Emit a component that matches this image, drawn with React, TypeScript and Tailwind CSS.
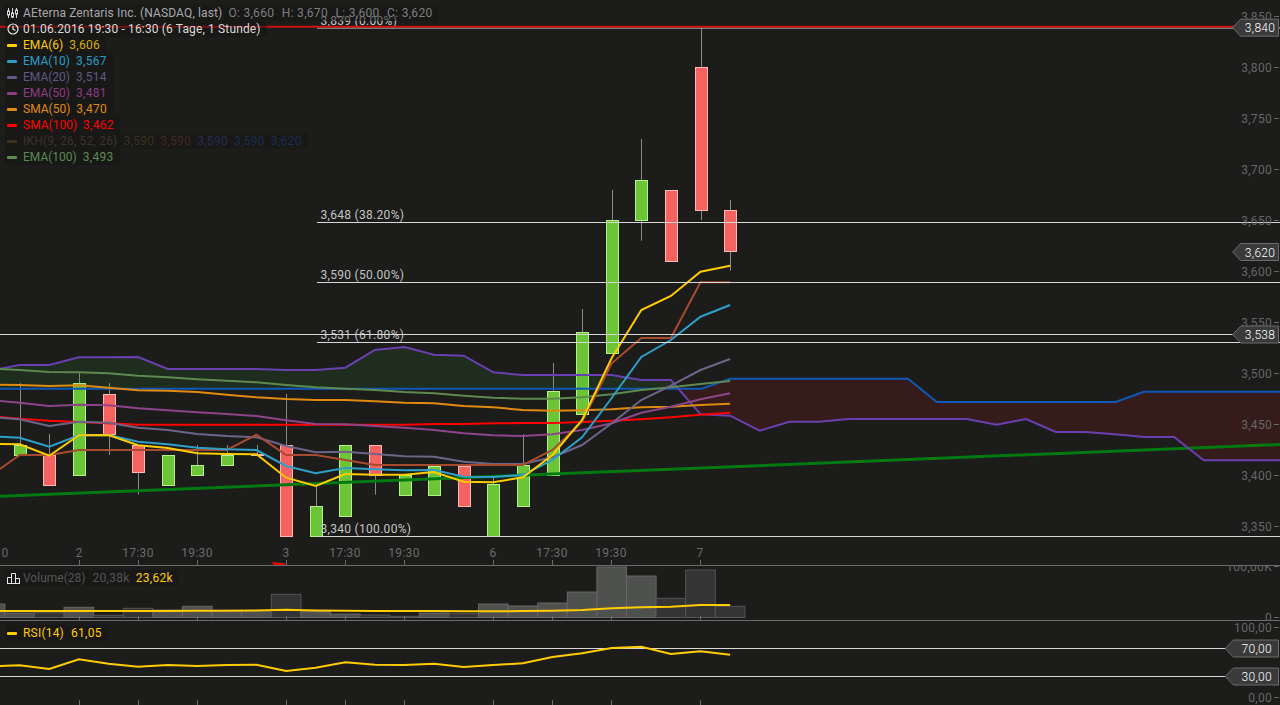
import React from "react";

const X = (i: number) => 19.7 + 29.6 * i;

// y values in page pixels: first entry sits at x=0, the rest on candle slots
const toPoints = (ys: number[]) =>
  ys.map((y, n) => `${n === 0 ? 0 : X(n - 1).toFixed(1)},${y}`).join(" ");

const SERIES = [
  { color: "#5e8a50", ys: [369, 370, 372, 372.3, 373.3, 375.7, 377.3, 379.3, 380.7, 382.3, 385, 387.3, 388.7, 390, 392, 393.3, 395.7, 397.7, 398.7, 398.7, 397.3, 394.3, 390, 387.3, 384, 381] },
  { color: "#ff0000", ys: [417, 418.7, 420.7, 422, 423.3, 424.7, 424.7, 424.7, 424.7, 424.7, 424.7, 424.7, 424.7, 424.7, 424.7, 424, 424, 423.3, 423, 423, 422, 420.7, 419.3, 417.3, 414.7, 412.7] },
  { color: "#e08a10", ys: [384.7, 385, 386, 385.3, 387.7, 390.3, 390.7, 392, 394.7, 397.3, 399, 400, 400, 401.3, 402.7, 403.3, 406, 407.3, 410, 410.7, 410.3, 409.3, 407.3, 406.7, 405, 403.7] },
  { color: "#8e4488", ys: [401, 402.7, 406, 404.7, 405.3, 408.3, 410.3, 412.3, 414, 416, 420.3, 424, 424.3, 426, 427.7, 430, 433.3, 435.3, 436, 434.3, 430, 423.3, 412.7, 406.7, 399.3, 393.3] },
  { color: "#6e6488", ys: [417.7, 419.3, 426, 421.7, 422.7, 427.7, 430, 434, 436, 437.3, 446, 452.3, 451.7, 454, 456.3, 456.7, 461.7, 464, 464, 457.3, 445, 423.3, 400, 385.7, 370, 359] },
  { color: "#a84a30", ys: [469, 455, 455, 450, 450, 450, 450, 450, 450, 434.7, 455, 455, 460, 465, 465, 465, 465, 465, 465, 450, 421.7, 363.3, 338, 338, 282.3, 282.3] },
  { color: "#2f9fc8", ys: [436.7, 437.7, 446.7, 435.3, 435, 441.7, 444.3, 447.7, 449.3, 450, 466, 473.3, 468, 469.3, 470.3, 470, 476.7, 477, 475, 460, 437.3, 398, 357, 340, 316.7, 305] },
  { color: "#ffcc00", ys: [444, 444.3, 455.7, 435.3, 435, 445.3, 448, 453.3, 454, 454.3, 477.7, 486, 474, 474.7, 474.7, 472, 481.7, 482.3, 477.3, 455, 420, 358, 310, 296, 271.7, 265.7] },
];

// open/close box plus wick, all in page pixels
const CANDLES: { i: number; top: number; bottom: number; hi?: number; lo?: number; up: boolean }[] = [
  { i: 0, top: 445, bottom: 455.7, hi: 383, up: true },
  { i: 1, top: 455, bottom: 485.7, hi: 434, up: false },
  { i: 2, top: 383, bottom: 475.7, hi: 373, up: true },
  { i: 3, top: 394, bottom: 434.7, hi: 383, lo: 455, up: false },
  { i: 4, top: 445, bottom: 472.7, lo: 494.7, up: false },
  { i: 5, top: 455, bottom: 485.7, up: true },
  { i: 6, top: 465, bottom: 475.7, hi: 445, up: true },
  { i: 7, top: 455, bottom: 465.7, hi: 445, up: true },
  { i: 8, top: 454, bottom: 455.5, hi: 445, up: false },
  { i: 9, top: 445, bottom: 536.7, hi: 394, up: false },
  { i: 10, top: 506, bottom: 536.7, hi: 485, up: true },
  { i: 11, top: 445, bottom: 516.7, up: true },
  { i: 12, top: 445, bottom: 475.7, lo: 494.7, up: false },
  { i: 13, top: 475, bottom: 495.7, up: true },
  { i: 14, top: 466, bottom: 495.7, up: true },
  { i: 15, top: 466, bottom: 506.7, up: false },
  { i: 16, top: 484, bottom: 536.7, hi: 476, up: true },
  { i: 17, top: 465, bottom: 506.7, hi: 434, up: true },
  { i: 18, top: 391, bottom: 475.7, hi: 363, up: true },
  { i: 19, top: 332, bottom: 414.3, hi: 309, up: true },
  { i: 20, top: 220.3, bottom: 353.5, hi: 190, up: true },
  { i: 21, top: 180, bottom: 220.7, hi: 139, lo: 240.7, up: true },
  { i: 22, top: 190, bottom: 261.7, up: false },
  { i: 23, top: 67, bottom: 210.7, hi: 28, lo: 220, up: false },
  { i: 24, top: 210, bottom: 251.7, hi: 200, lo: 270.7, up: false },
];

const PURPLE = [368.7, 365, 365, 357.3, 357.3, 357, 369, 369, 369, 369, 370, 370, 367.7, 350, 347, 354.7, 355.7, 372.3, 375, 375, 375, 375, 380, 380, 414.3, 415.7, 430.7, 421.7, 421.7, 419, 419, 419, 419, 419, 424.7, 419, 432, 432, 434.3, 437, 437, 460.3, 460.3, 460.3, 460.3];
const BLUE_LINE = "0,388.7 701.7,388.7 730,378.7 908,378.7 936.8,402 1115.5,402 1144,391.7 1280,391.7";

const CROSS_X = 678.6;
const greenCloud = `0,368.7 ${PURPLE.slice(1, 24).map((y, n) => `${X(n).toFixed(1)},${y}`).join(" ")} ${CROSS_X},388.7 0,388.7`;
const redCloud = `${CROSS_X},388.7 701.7,388.7 730,378.7 908,378.7 936.8,402 1115.5,402 1144,391.7 1280,391.7 1280,460.3 ${PURPLE.slice(24, 43).reverse().map((y, n) => `${X(41 - n).toFixed(1)},${y}`).join(" ")}`;

const FIBS = [
  { y: 28, label: "3,839 (0.00%)", text: 25 },
  { y: 222.5, label: "3,648 (38.20%)", text: 219 },
  { y: 282.5, label: "3,590 (50.00%)", text: 279 },
  { y: 342.5, label: "3,531 (61.80%)", text: 339 },
  { y: 536.5, label: "3,340 (100.00%)", text: 533 },
];

const PRICES = ["3,850", "3,800", "3,750", "3,700", "3,650", "3,600", "3,550", "3,500", "3,450", "3,400", "3,350"];

const TIME_TICKS = [
  { x: 79, label: "2" },
  { x: 138, label: "17:30" },
  { x: 197, label: "19:30" },
  { x: 286, label: "3" },
  { x: 345, label: "17:30" },
  { x: 404, label: "19:30" },
  { x: 493, label: "6" },
  { x: 552, label: "17:30" },
  { x: 611, label: "19:30" },
  { x: 700, label: "7" },
];

const VOLUME: { top: number; up: boolean }[] = [
  { top: 604, up: true },
  { top: 613, up: true },
  { top: 612.7, up: false },
  { top: 607.3, up: true },
  { top: 615.3, up: false },
  { top: 608.3, up: false },
  { top: 610, up: true },
  { top: 606.3, up: true },
  { top: 610.3, up: true },
  { top: 610.7, up: true },
  { top: 594.3, up: false },
  { top: 611.7, up: true },
  { top: 614, up: true },
  { top: 615, up: false },
  { top: 616.3, up: false },
  { top: 613, up: true },
  { top: 613.7, up: false },
  { top: 604, up: true },
  { top: 606, up: true },
  { top: 603, up: true },
  { top: 592, up: true },
  { top: 567, up: true },
  { top: 576, up: true },
  { top: 598.3, up: false },
  { top: 570, up: false },
  { top: 606.3, up: false },
];

const VOLUME_MA = [611, 611, 611, 611, 611, 611, 611, 610.7, 610.7, 610.5, 609.8, 610.5, 610.8, 611, 611, 611, 611.2, 611.3, 611, 610.7, 610, 608.3, 607.3, 606.7, 605, 605];
const RSI = [666, 665.3, 669, 659.3, 663.7, 666.7, 665, 666, 665, 664.7, 671, 667.7, 662.3, 664.7, 665, 663.7, 667, 665, 663.3, 657, 653.3, 648, 646.7, 654, 651.3, 654.7];

function PriceTag({ y, label, tip, textX }: { y: number; label: string; tip: number; textX: number }) {
  const shoulder = tip + 8;
  return (
    <g>
      <polygon
        points={`${tip},${y} ${shoulder},${y - 8.5} 1278.5,${y - 8.5} 1278.5,${y + 8.5} ${shoulder},${y + 8.5}`}
        fill="#3a3a3a"
        stroke="#6b6b6b"
      />
      <text x={textX} y={y + 4.5} textAnchor="end" className="fill-white text-[12px] font-light">
        {label}
      </text>
    </g>
  );
}

function AxisLabel({ y, label }: { y: number; label: string }) {
  return (
    <g>
      <text x="1272" y={y + 4.5} textAnchor="end" className="fill-[#666666] text-[12px]">
        {label}
      </text>
      <line x1="1274" x2="1279" y1={y + 0.5} y2={y + 0.5} stroke="#666666" />
    </g>
  );
}

function Candle({ i, top, bottom, hi, lo, up }: (typeof CANDLES)[number]) {
  const x = Math.round(X(i));
  const y0 = Math.floor(top) + 0.5;
  const y1 = Math.floor(bottom) + 0.5;
  return (
    <g>
      {hi !== undefined && <line x1={x + 0.5} x2={x + 0.5} y1={hi} y2={y0} stroke="#8a8a8a" />}
      {lo !== undefined && <line x1={x + 0.5} x2={x + 0.5} y1={y1} y2={lo} stroke="#8a8a8a" />}
      <rect
        x={x - 5.5}
        y={y0}
        width="12"
        height={y1 - y0}
        fill={up ? "#6cc437" : "#f56262"}
        stroke={up ? "#b8f08c" : "#ffb9b0"}
      />
    </g>
  );
}

function LegendRow({ color, children }: { color?: string; children: React.ReactNode }) {
  return (
    <div className="flex h-4 items-center gap-[6px] bg-[#14141480] pr-[6px] pl-[2px]">
      {color ? <span className="h-[3px] w-[10px] rounded-[1px]" style={{ backgroundColor: color }} /> : null}
      {children}
    </div>
  );
}

function Name({ c, children }: { c: string; children: React.ReactNode }) {
  return (
    <span className="tracking-normal" style={{ color: c }}>
      {children}
    </span>
  );
}

function Val({ c, children }: { c: string; children: React.ReactNode }) {
  return <span style={{ color: c }}>{children}</span>;
}

const LEGEND = [
  { color: "#ffcc00", name: "EMA(6)", value: "3,606", vc: "#d9ad00" },
  { color: "#2a9cc8", name: "EMA(10)", value: "3,567", vc: "#2a9cc8" },
  { color: "#5f5a82", name: "EMA(20)", value: "3,514", vc: "#5f5a82" },
  { color: "#8a3e82", name: "EMA(50)", value: "3,481", vc: "#8a3e82" },
  { color: "#e08a10", name: "SMA(50)", value: "3,470", vc: "#e08a10" },
  { color: "#ff0000", name: "SMA(100)", value: "3,462", vc: "#ff0000" },
];

export default function App() {
  return (
    <div className="flex h-[705px] w-[1280px] flex-col overflow-hidden bg-[#1c1c1b] font-['Roboto',sans-serif] text-[12px] leading-4 tracking-[0.3px]">
      {/* price panel */}
      <div className="relative h-[566px] border-b border-[#6b6b6b]">
        <svg width="1280" height="565" className="block">
          {CANDLES.map((c) => (
            <Candle key={c.i} {...c} />
          ))}
          <polygon points={greenCloud} fill="#2ca02c" fillOpacity="0.13" />
          <polygon points={redCloud} fill="#b01e1e" fillOpacity="0.17" />
          <line x1="0" y1="496.3" x2="1280" y2="444.5" stroke="#007a10" strokeWidth="3" />
          <polyline points={BLUE_LINE} fill="none" stroke="#1058b8" strokeWidth="2" />
          <polyline
            points={PURPLE.map((y, n) => `${n === 0 ? 0 : X(n - 1).toFixed(1)},${y}`).join(" ")}
            fill="none"
            stroke="#6a40b0"
            strokeWidth="2"
          />
          {SERIES.map((s) => (
            <polyline key={s.color} points={toPoints(s.ys)} fill="none" stroke={s.color} strokeWidth="2" />
          ))}

          {FIBS.map((f) => (
            <g key={f.label}>
              <line x1="317" x2="1280" y1={f.y} y2={f.y} stroke="#d8d8d8" />
              <text x="320.5" y={f.text} className="fill-[#c4c4c4] text-[12px]">
                {f.label}
              </text>
            </g>
          ))}
          <line x1="0" x2="1236" y1="26.7" y2="26.7" stroke="#c81212" strokeWidth="2" />
          <line x1="0" x2="1236" y1="334.5" y2="334.5" stroke="#d8d8d8" />

          {PRICES.map((p, n) => (
            <AxisLabel key={p} y={16 + n * 51} label={p} />
          ))}
          <PriceTag y={27.7} label="3,840" tip={1232.7} textX={1275.3} />
          <PriceTag y={252} label="3,620" tip={1232.7} textX={1275.3} />
          <PriceTag y={334.5} label="3,538" tip={1232.7} textX={1275.3} />

          <text x="1.5" y="557" className="fill-[#6b6b6b] text-[12px]">
            0
          </text>
          {TIME_TICKS.map((t) => (
            <g key={t.x}>
              <text x={t.x} y="557" textAnchor="middle" className="fill-[#6b6b6b] text-[12px]">
                {t.label}
              </text>
              <line x1={t.x + 0.5} x2={t.x + 0.5} y1="560" y2="565" stroke="#6b6b6b" />
            </g>
          ))}
          <polygon points="271,562 286,563.5 285,565 274,565" fill="#f00000" />
        </svg>

        <div className="absolute top-[5px] left-[5px] flex flex-col items-start whitespace-nowrap">
          <LegendRow>
            <svg className="-mr-[1px]" width="11" height="12" viewBox="0 0 11 12" fill="none" stroke="#d8d8d8" strokeWidth="1">
              <path d="M1.5 1v10M5.5 1v10M9.5 1v10" />
              <rect x="0.5" y="4" width="2" height="4" fill="#1b1b1b" />
              <rect x="4.5" y="6" width="2" height="4" fill="#1b1b1b" />
              <rect x="8.5" y="3" width="2" height="4" fill="#1b1b1b" />
            </svg>
            <span className="tracking-[0.13px] text-[#a8a8a8]">AEterna Zentaris Inc. (NASDAQ, last)</span>
            <span className="flex gap-[7.5px] text-[#7e7e7e]">
              <span>O: 3,660</span>
              <span>H: 3,670</span>
              <span>L: 3,600</span>
              <span>C: 3,620</span>
            </span>
          </LegendRow>
          <LegendRow>
            <svg className="-mr-[2px]" width="12" height="12" viewBox="0 0 12 12" fill="none" stroke="#e8e8e8" strokeWidth="1.2">
              <circle cx="6" cy="6" r="5" />
              <path d="M6 2.8V6.2L8.5 7.5" />
            </svg>
            <span className="tracking-[0.14px] text-[#d8d8d8]">01.06.2016 19:30 - 16:30 (6 Tage, 1 Stunde)</span>
          </LegendRow>
          {LEGEND.map((r) => (
            <LegendRow key={r.name} color={r.color}>
              <Name c={r.color}>{r.name}</Name>
              <Val c={r.vc}>{r.value}</Val>
            </LegendRow>
          ))}
          <LegendRow color="#3c3220">
            <span className="tracking-[0.2px] text-[#3c3428]">IKH(9, 26, 52, 26)</span>
            <span className="flex gap-[6px]">
              <Val c="#3a3220">3,590</Val>
              <Val c="#452820">3,590</Val>
              <Val c="#2a2a55">3,590</Val>
              <Val c="#1a2d50">3,590</Val>
              <Val c="#1a2d50">3,620</Val>
            </span>
          </LegendRow>
          <LegendRow color="#5c8a50">
            <Name c="#5c8a50">EMA(100)</Name>
            <Val c="#5c8a50">3,493</Val>
          </LegendRow>
        </div>
      </div>

      {/* volume panel */}
      <div className="relative h-[55px] border-b border-[#6b6b6b]">
        <svg width="1280" height="54" className="block">
          <g transform="translate(0,-566)">
            {VOLUME.map((v, n) => (
              <rect
                key={n}
                x={X(n - 1) - 14.8}
                y={v.top}
                width="29.6"
                height={617.5 - v.top}
                fill={v.up ? "#4f514f" : "#343434"}
                stroke={v.up ? "#666666" : "#555555"}
              />
            ))}
            <polyline points={toPoints(VOLUME_MA)} fill="none" stroke="#ffcc00" strokeWidth="2" />
            {TIME_TICKS.map((t) => (
              <line key={t.x} x1={t.x + 0.5} x2={t.x + 0.5} y1="616" y2="620" stroke="#6b6b6b" />
            ))}
            <AxisLabel y={566} label="100,00K" />
            <AxisLabel y={617} label="0" />
          </g>
        </svg>
        <div className="absolute top-[4px] left-[5px] whitespace-nowrap">
          <div className="flex h-4 items-center gap-[6px] bg-[#14141480] pr-[6px] pl-[2px]">
            <svg className="-mr-[4px]" width="14" height="12" viewBox="0 0 14 12" fill="none" stroke="#e8e8e8" strokeWidth="1">
              <path d="M0.5 11.5V5.5H4.5V11.5M4.5 11.5V1.5H8.5V11.5M8.5 11.5V6.5H12.5V11.5M0 11.5H13" />
            </svg>
            <span className="mr-[1px] tracking-normal text-[#555555]">Volume(28)</span>
            <span className="text-[#555555]">20,38k</span>
            <span className="text-[#ffcc00]">23,62k</span>
          </div>
        </div>
      </div>

      {/* rsi panel */}
      <div className="relative flex-1">
        <svg width="1280" height="84" className="block">
          <g transform="translate(0,-621)">
            <line x1="0" x2="1226" y1="648.5" y2="648.5" stroke="#d8d8d8" />
            <line x1="0" x2="1226" y1="676.5" y2="676.5" stroke="#d8d8d8" />
            <polyline points={toPoints(RSI)} fill="none" stroke="#ffcc00" strokeWidth="2" />
            {TIME_TICKS.map((t) => (
              <line key={t.x} x1={t.x + 0.5} x2={t.x + 0.5} y1="700" y2="705" stroke="#6b6b6b" />
            ))}
            <AxisLabel y={627} label="100,00" />
            <AxisLabel y={697} label="0,00" />
            <PriceTag y={648.5} label="70,00" tip={1225.3} textX={1272} />
            <PriceTag y={676.5} label="30,00" tip={1225.3} textX={1272} />
          </g>
        </svg>
        <div className="absolute top-[4px] left-[5px] flex flex-col items-start whitespace-nowrap">
          <LegendRow color="#ffcc00">
            <span className="mr-[1px] tracking-[0.2px] text-[#ffcc00]">RSI(14)</span>
            <Val c="#ffcc00">61,05</Val>
          </LegendRow>
        </div>
      </div>
    </div>
  );
}
